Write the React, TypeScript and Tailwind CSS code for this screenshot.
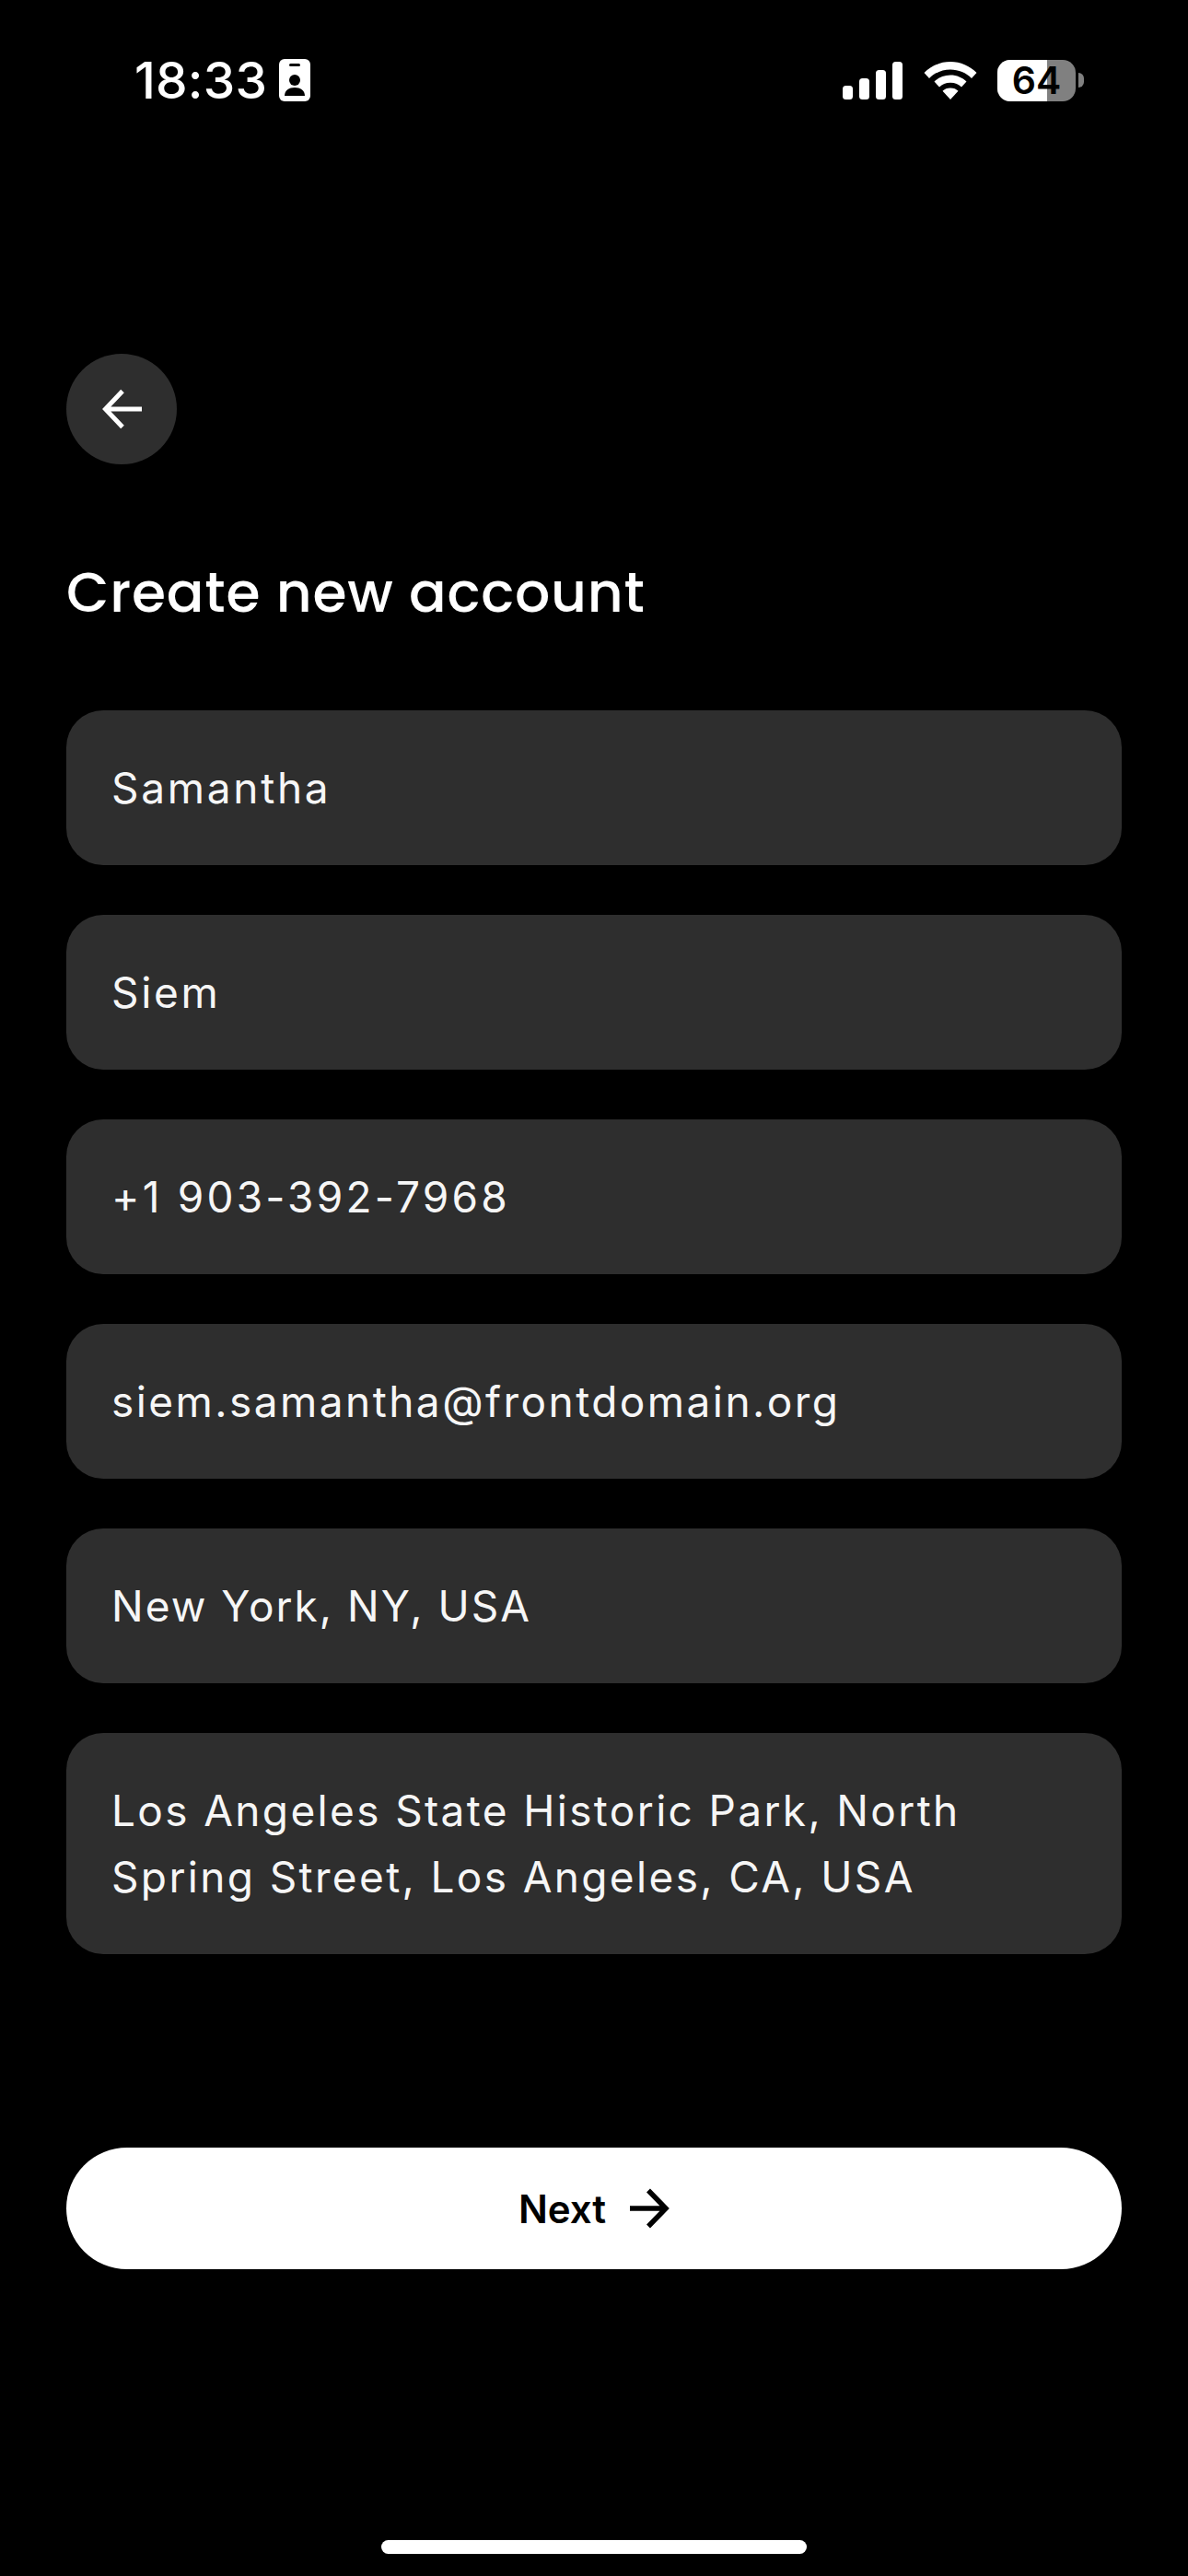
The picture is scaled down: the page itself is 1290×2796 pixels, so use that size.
const textCls = "font-[380] text-[46px] leading-[72px] text-[#f6f6f6]";

function Field({ t, extra }: { t: string; extra: string }) {
  return <div className={"h-[168px] rounded-[40px] bg-[#2e2e2e] px-[49px] flex items-center " + textCls + " " + extra}>{t}</div>;
}

export default function App() {
  return (
    <div className="w-[1290px] h-[2796px] bg-black text-white flex flex-col font-['Inter',sans-serif]">
      <div className="h-[174px] flex items-start justify-between pt-[64px] pl-[146px] pr-[113px]">
        <div className="flex items-center gap-[13px] h-[46px]">
          <span className="text-[55px] leading-[46px] font-medium tracking-[0.2px]">18:33</span>
          <svg width="34" height="46" viewBox="0 0 34 46">
            <rect width="34" height="46" rx="6" fill="#fff" />
            <rect x="11" y="5" width="12" height="3" rx="1.500" fill="#000" />
            <circle cx="17" cy="23" r="6" fill="#000" />
            <path d="M6 40c0-6 5-9 11-9s11 3 11 9z" fill="#000" />
          </svg>
        </div>
        <div className="flex items-center h-[46px]">
          <svg width="66" height="41" viewBox="0 0 66 41" fill="#fff" className="mr-[22px]">
            <rect x="0" y="26" width="11" height="15" rx="3.500" />
            <rect x="18" y="18" width="11" height="23" rx="3.500" />
            <rect x="36" y="9" width="11" height="32" rx="3.500" />
            <rect x="54" y="0" width="11" height="41" rx="3.500" />
          </svg>
          <svg width="58" height="41" viewBox="0 0 58 41" fill="#fff" className="mr-[22px]">
            <path d="M29 0C18 0 8 4.500 0.500 12L6 18c6-6 14-9.500 23-9.500S46 12 52 18l5.500-6C50 4.500 40 0 29 0z" />
            <path d="M29 14.500c-7 0-13 2.700-17.500 7l5.500 6c3-3 7-4.800 12-4.800s9 1.800 12 4.800l5.500-6C42 17.200 36 14.500 29 14.500z" />
            <path d="M29 28.500c-3.500 0-6.500 1.200-8.500 3.300L29 41l8.500-9.200C35.500 29.700 32.500 28.500 29 28.500z" />
          </svg>
          <div className="relative w-[85px] h-[45px] rounded-[14px] bg-[#808080] flex items-center justify-center">
            <div className="absolute left-0 top-0 bottom-0 w-[54px] rounded-l-[14px] bg-white" />
            <span className="relative text-[41px] leading-[45px] font-semibold text-black">64</span>
          </div>
          <div className="w-[6px] h-[16px] ml-[3px] rounded-r-full bg-[#808080]" />
        </div>
      </div>
      <div className="px-[72px] flex flex-col flex-1">
        <div className="mt-[210px] w-[120px] h-[120px] rounded-full bg-[#2e2e2e] flex items-center justify-center">
          <svg width="44" height="44" viewBox="0 0 44 44" fill="none" stroke="#fff" strokeWidth="5" strokeLinejoin="miter">
            <path d="M44 22H5M23 2.500 4.500 22 23 41.500" />
          </svg>
        </div>
        <h1 className="mt-[103px] text-[60px] leading-[72px] font-medium tracking-[0.8px] font-['Poppins','Inter',sans-serif]">Create new account</h1>
        <div className="mt-[92px] flex flex-col gap-[54px]">
          <Field t="Samantha" extra="tracking-[2.7px]" />
          <Field t="Siem" extra="tracking-[2.7px]" />
          <Field t="+1 903-392-7968" extra="tracking-[3.2px]" />
          <Field t="siem.samantha@frontdomain.org" extra="tracking-[2.45px]" />
          <Field t="New York, NY, USA" extra="tracking-[2px]" />
          <div className={"h-[240px] rounded-[40px] bg-[#2e2e2e] px-[49px] flex items-center tracking-[2.35px] " + textCls}>
            Los Angeles State Historic Park, North Spring Street, Los Angeles, CA, USA
          </div>
        </div>
        <div className="mt-[210px] h-[132px] rounded-full bg-white text-black flex items-center justify-center gap-[25px]">
          <span className="text-[42px] font-semibold">Next</span>
          <svg width="44" height="44" viewBox="0 0 44 44" fill="none" stroke="#000" strokeWidth="5.500" strokeLinejoin="miter">
            <path d="M1 22h40M21 2.500 40 22 21 41.500" />
          </svg>
        </div>
        <div className="mt-auto mb-[24px] self-center w-[462px] h-[15px] rounded-full bg-white" />
      </div>
    </div>
  );
}
